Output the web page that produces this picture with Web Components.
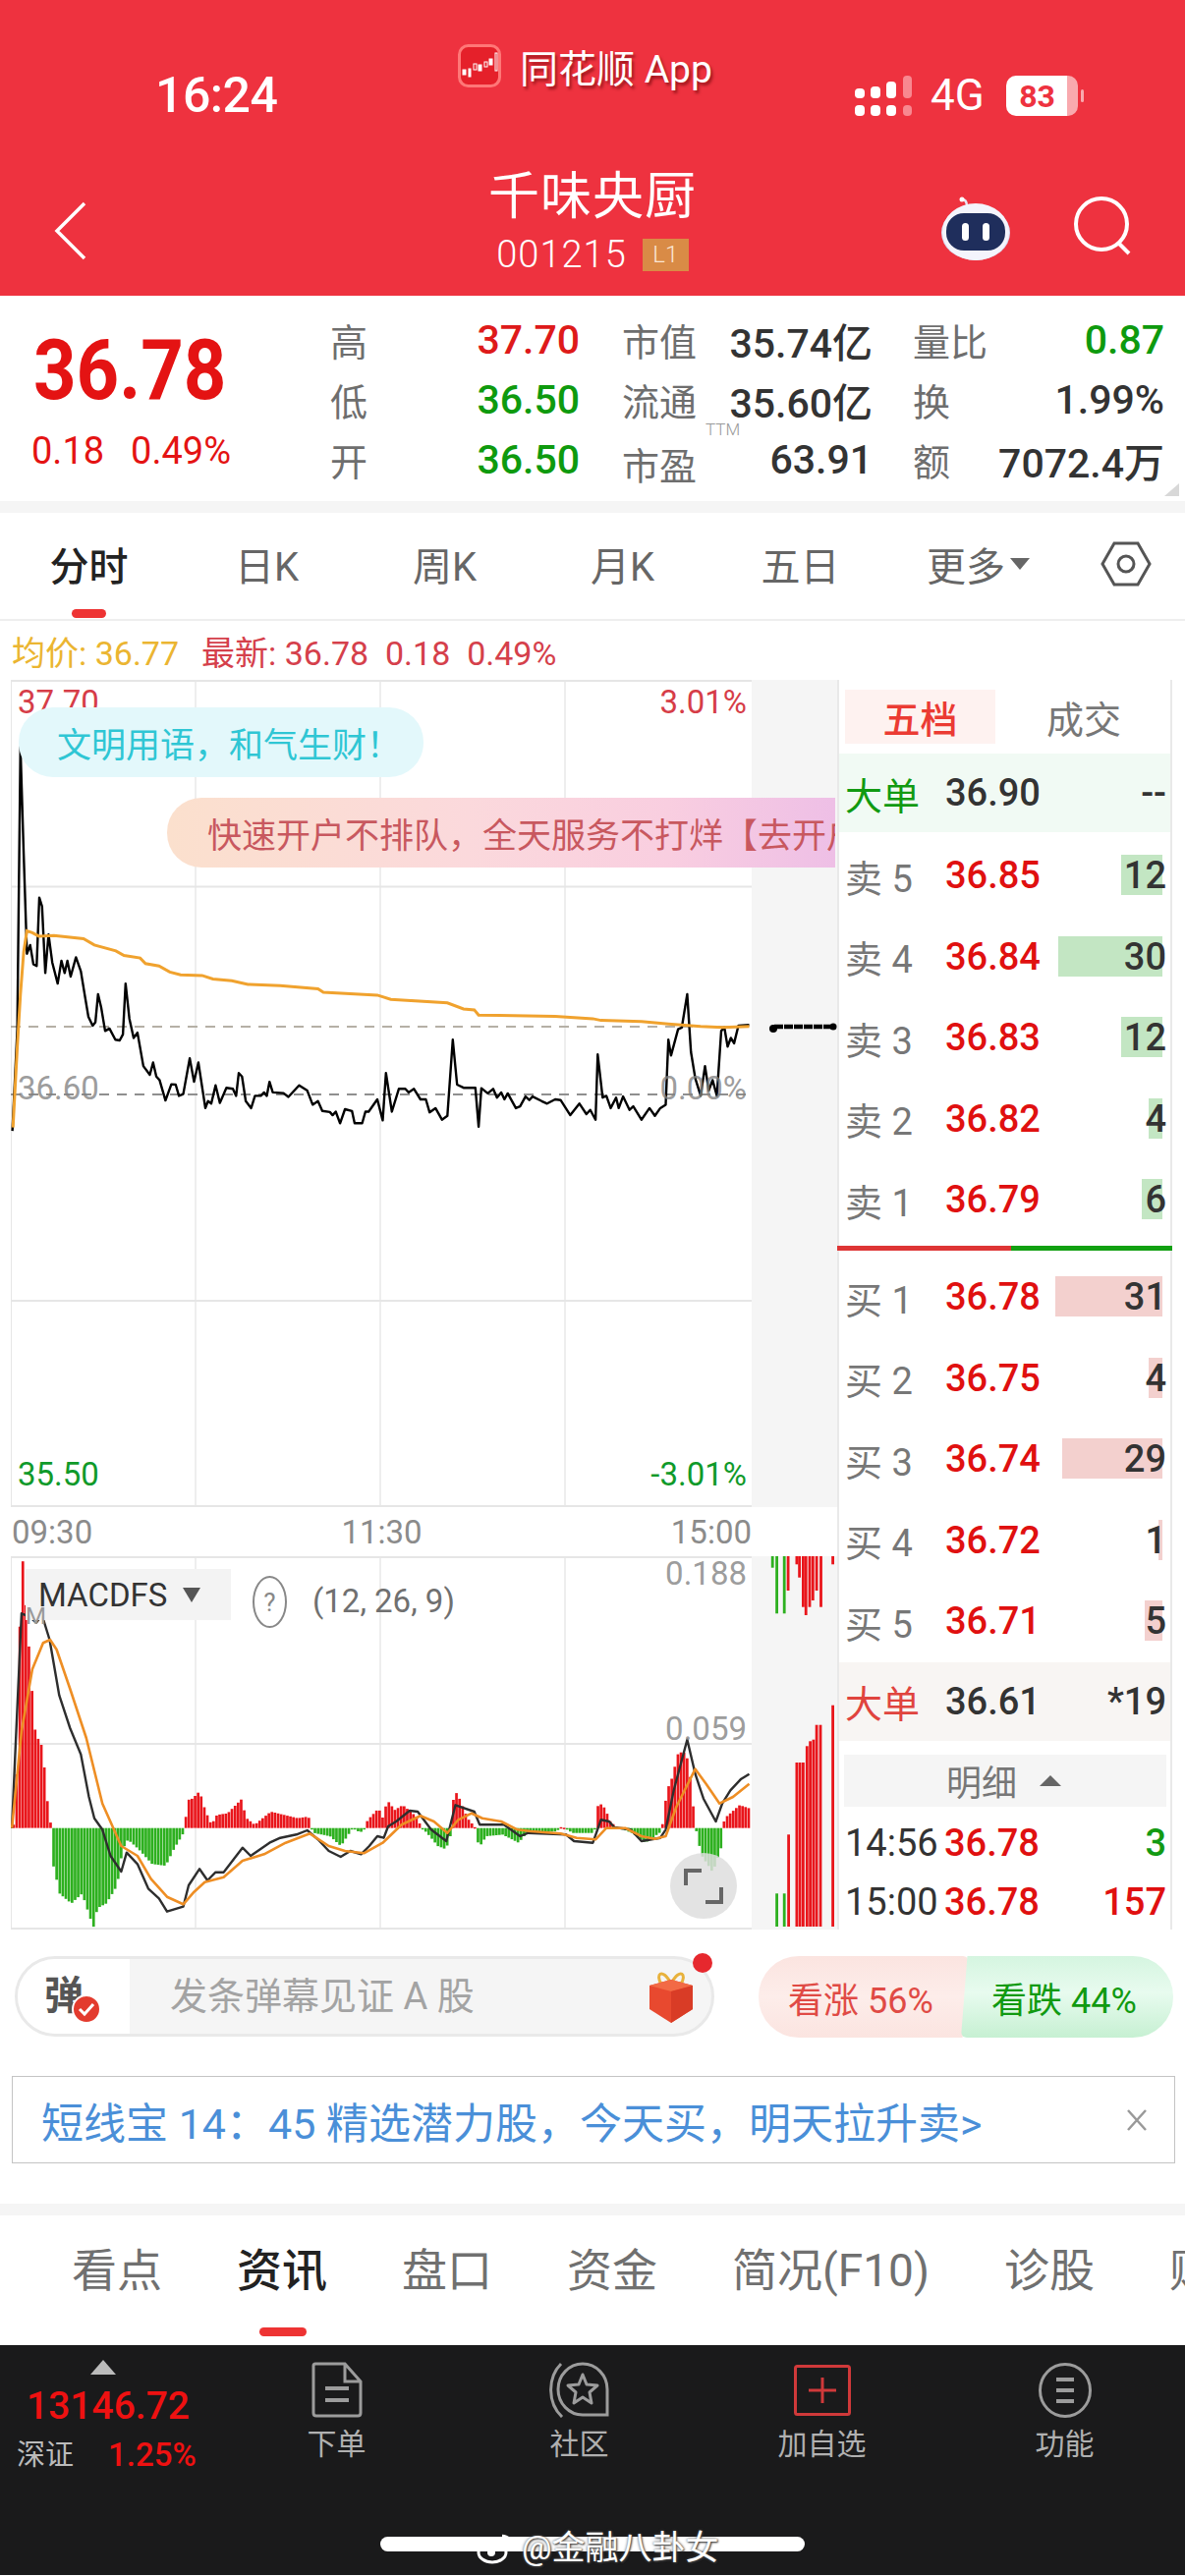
<!DOCTYPE html>
<html lang="zh">
<head>
<meta charset="utf-8">
<title>千味央厨</title>
<style>
  html, body { margin: 0; background: #fff; }
  body { width: 1206px; height: 2622px; overflow: hidden; display: flex; flex-direction: column;
    font-family: Roboto, "Noto Sans CJK SC", sans-serif; color: #333; }
</style>
</head>
<body>
<app-header></app-header>
<quote-panel></quote-panel>
<period-tabs></period-tabs>
<price-legend></price-legend>
<chart-area>
  <intraday-chart></intraday-chart>
  <order-book>
    <book-row kind="big-sell" label="大单" price="36.90" qty="--"></book-row>
    <book-row kind="sell" label="卖 5" price="36.85" qty="12" bar="42"></book-row>
    <book-row kind="sell" label="卖 4" price="36.84" qty="30" bar="106"></book-row>
    <book-row kind="sell" label="卖 3" price="36.83" qty="12" bar="42"></book-row>
    <book-row kind="sell" label="卖 2" price="36.82" qty="4" bar="14"></book-row>
    <book-row kind="sell" label="卖 1" price="36.79" qty="6" bar="21"></book-row>
    <div class="split" slot="split"></div>
    <book-row slot="buy" kind="buy" label="买 1" price="36.78" qty="31" bar="109"></book-row>
    <book-row slot="buy" kind="buy" label="买 2" price="36.75" qty="4" bar="14"></book-row>
    <book-row slot="buy" kind="buy" label="买 3" price="36.74" qty="29" bar="102"></book-row>
    <book-row slot="buy" kind="buy" label="买 4" price="36.72" qty="1" bar="4"></book-row>
    <book-row slot="buy" kind="buy" label="买 5" price="36.71" qty="5" bar="18"></book-row>
    <book-row slot="buy" kind="big-buy" label="大单" price="36.61" qty="*19"></book-row>
  </order-book>
</chart-area>
<danmu-bar></danmu-bar>
<ad-banner></ad-banner>
<news-tabs></news-tabs>
<bottom-bar></bottom-bar>

<script>
// every static block is just a template cloned into an open shadow root
function component(name, html) {
  const template = document.createElement('template');
  template.innerHTML = html;
  customElements.define(name, class extends HTMLElement {
    constructor() {
      super();
      this.attachShadow({mode: 'open'}).appendChild(template.content.cloneNode(true));
    }
  });
}

component('app-header', `
  <style>
    :host { display: block; height: 301px; background: #EE323F; color: #fff; flex: none; }
    .status { height: 150px; display: flex; box-sizing: border-box; padding-left: 158px; }
    .time { width: 308px; padding-top: 68px; font-size: 50px; font-weight: 500; line-height: 58px; letter-spacing: -.5px; }
    .app { display: flex; align-items: center; gap: 19px; height: 44px; margin-top: 45px; font-size: 39px;
      text-shadow: 2px 3px 3px rgba(90,0,0,.55); }
    .right { margin-left: auto; padding: 77px 109px 0 0; display: flex; gap: 19px; height: 41px; }
    .net { font-size: 44px; line-height: 41px; font-weight: 400; width: 58px; }
    .batt { width: 73px; height: 41px; border-radius: 10px; color: #EE323F; font-size: 32px; font-weight: 700;
      display: flex; align-items: center; justify-content: center; padding-right: 10px; box-sizing: border-box;
      background: linear-gradient(90deg, #fff 85%, #f9a9ae 85%); position: relative; }
    .batt::after { content: ""; position: absolute; right: -6px; top: 14px; width: 3px; height: 13px; background: #f9a9ae; border-radius: 2px; }
    .nav { height: 151px; display: grid; grid-template-columns: 1fr auto 1fr; }
    .back { padding: 55px 0 0 55px; }
    .mid { display: flex; flex-direction: column; align-items: center; padding-top: 20px; }
    .name { font-size: 52px; line-height: 62px; letter-spacing: 1px; }
    .code { display: flex; align-items: center; gap: 16px; margin-top: 10px; font-size: 38px; font-weight: 300; line-height: 34px; letter-spacing: 1px; }
    .lv { width: 47px; height: 33px; background: #D98B46; font-size: 24px; color: #fbe6d3; text-align: center; line-height: 33px; letter-spacing: 0; }
    .tools { display: flex; justify-content: flex-end; gap: 63px; padding: 50px 54px 0 0; align-items: flex-start; }
  </style>
  <div class="status">
    <div class="time">16:24</div>
    <div class="app">
      <svg width="44" height="44" viewBox="0 0 44 44">
        <rect x="1.5" y="1.5" width="41" height="41" rx="9" fill="#E5202A" stroke="#F77" stroke-width="3"/>
        <g fill="#fff" stroke="#fff"><rect x="5" y="26" width="3" height="5"/><rect x="11" y="25" width="2" height="8"/><rect x="16" y="20" width="3" height="6" fill="none"/><rect x="21" y="21" width="3" height="6"/><rect x="27" y="18" width="3" height="5" fill="none"/><rect x="32" y="15" width="3" height="6"/><rect x="38" y="9" width="2" height="18" fill="none"/></g>
      </svg>
      <span>同花顺 App</span>
    </div>
    <div class="right">
      <svg width="58" height="41" viewBox="0 0 58 41">
        <g fill="#fff"><rect x="0" y="13" width="10" height="10" rx="4"/><rect x="0" y="30" width="10" height="11" rx="4"/><rect x="16" y="11" width="10" height="12" rx="4"/><rect x="16" y="30" width="10" height="11" rx="4"/><rect x="32" y="6" width="10" height="17" rx="4"/><rect x="32" y="30" width="10" height="11" rx="4"/></g>
        <g fill="#F88890"><rect x="49" y="0" width="9" height="23" rx="4"/><rect x="49" y="30" width="9" height="11" rx="4"/></g>
      </svg>
      <div class="net">4G</div>
      <div class="batt">83</div>
    </div>
  </div>
  <div class="nav">
    <div class="back">
      <svg width="34" height="60" viewBox="0 0 34 60"><path d="M31 2 L3 30 L31 58" fill="none" stroke="#fff" stroke-width="3.5"/></svg>
    </div>
    <div class="mid">
      <div class="name">千味央厨</div>
      <div class="code">001215<span class="lv">L1</span></div>
    </div>
    <div class="tools">
      <svg width="72" height="66" viewBox="0 0 72 66">
        <path d="M27 10 q0 -7 -5 -7" fill="none" stroke="#e9e6f5" stroke-width="2.5"/><circle cx="22" cy="3" r="2.5" fill="#fff"/>
        <ellipse cx="36" cy="37" rx="35" ry="28" fill="#DADCF2"/>
        <ellipse cx="36" cy="36" rx="34" ry="29" fill="#F4F4FC"/>
        <rect x="6" y="17" width="60" height="38" rx="18" fill="#1F2E5C"/>
        <rect x="22" y="27" width="7" height="18" rx="3.5" fill="#fff"/><rect x="43" y="27" width="7" height="18" rx="3.5" fill="#fff"/>
      </svg>
      <svg width="60" height="60" viewBox="0 0 60 60">
        <circle cx="29" cy="28" r="26" fill="none" stroke="#fff" stroke-width="4"/><path d="M46 47 L57 58" stroke="#fff" stroke-width="4"/>
      </svg>
    </div>
  </div>
`);

component('quote-panel', `
  <style>
    :host { display: flex; height: 209px; background: #fff; flex: none; position: relative; border-bottom: 12px solid #F5F5F5; }
    .now { width: 336px; box-sizing: border-box; padding: 33px 0 0 32px; color: #E41313; }
    .big { font-size: 76px; font-weight: 700; line-height: 76px; transform: scaleY(1.12); transform-origin: top left; letter-spacing: 0; padding-left: 2px; }
    .chg { display: flex; gap: 27px; margin-top: 27px; font-size: 38px; line-height: 44px; }
    .grid { display: grid; grid-template-columns: 149px 105px 43px 78px 177px 41px 79px 177px; grid-auto-rows: 61px; padding-top: 14px; align-items: center; }
    .l { font-size: 38px; color: #6e6e6e; white-space: nowrap; }
    .v { font-size: 41px; font-weight: 500; text-align: right; white-space: nowrap; color: #333; }
    .up { color: #DE1A1A; } .dn { color: #0E9A0E; }
    .sp { grid-column: auto; }
    .ttm { position: relative; top: 4px; }
    .ttm sup { position: absolute; left: 85px; top: -17px; font-size: 17px; color: #999; line-height: 20px; font-weight: 300; }
    .corner { position: absolute; right: 6px; bottom: 5px; border-left: 15px solid transparent; border-bottom: 13px solid #d8d8d8; }
  </style>
  <div class="now">
    <div class="big">36.78</div>
    <div class="chg"><span>0.18</span><span>0.49%</span></div>
  </div>
  <div class="grid">
    <div class="l">高</div><div class="v up">37.70</div><div class="sp"></div><div class="l">市值</div><div class="v">35.74亿</div><div class="sp"></div><div class="l">量比</div><div class="v dn">0.87</div>
    <div class="l">低</div><div class="v dn">36.50</div><div class="sp"></div><div class="l">流通</div><div class="v">35.60亿</div><div class="sp"></div><div class="l">换</div><div class="v">1.99%</div>
    <div class="l">开</div><div class="v dn">36.50</div><div class="sp"></div><div class="l ttm">市盈<sup>TTM</sup></div><div class="v">63.91</div><div class="sp"></div><div class="l">额</div><div class="v">7072.4万</div>
  </div>
  <div class="corner"></div>
`);

component('period-tabs', `
  <style>
    :host { display: grid; grid-template-columns: repeat(6, 181px) 120px; height: 110px; box-sizing: border-box; border-bottom: 2px solid #EEE; position: relative; flex: none;
      font-size: 40px; color: #666; align-items: center; justify-items: center; padding-bottom: 4px; }
    .on { color: #222; font-weight: 500; }
    .on::after { content: ""; position: absolute; left: 73px; bottom: 1px; width: 35px; height: 9px; border-radius: 5px; background: #EE3333; }
    .more { display: flex; align-items: center; gap: 5px; }
    .more i { border: 10px solid transparent; border-top: 12px solid #666; border-bottom: 0; }
  </style>
  <div class="on">分时</div><div>日K</div><div>周K</div><div>月K</div><div>五日</div>
  <div class="more">更多<i></i></div>
  <svg width="52" height="46" viewBox="0 0 52 46"><path d="M14 2 H38 L50 23 L38 44 H14 L2 23 Z" fill="none" stroke="#555" stroke-width="3"/><circle cx="26" cy="23" r="8" fill="none" stroke="#555" stroke-width="3"/></svg>
`);

component('price-legend', `
  <style>
    :host { display: flex; height: 60px; align-items: center; padding-left: 12px; font-size: 34px; color: #D5404B; flex: none; white-space: pre; }
    .avg { color: #EBB531; margin-right: 23px; }
  </style>
  <span class="avg">均价: 36.77</span><span>最新: 36.78  0.18  0.49%</span>
`);

component('chart-area', `
  <style>
    :host { display: flex; height: 1272px; padding-left: 11px; flex: none; }
  </style>
  <slot></slot>
`);

// points below were read off the reference crops, so they get mapped to page px here
const mainLine = [23,1490,32,1200,38,395,44,700,50,985,56,960,62,1015,68,1020,73,825,78,850,84,1040,90,930,97,1010,107,1070,114,1005,120,1040,125,1005,131,1050,141,995,150,1035,157,1100,164,1165,172,1190,177,1180,182,1100,188,1140,195,1205,203,1198,214,1230,222,1232,228,1215,233,1070,240,1170,248,1225,255,1210,266,1305,278,1330,284,1295,290,1335,296,1345,307,1403,318,1357,326,1358,332,1390,340,1385,352,1283,360,1350,368,1295,381,1425,386,1405,392,1412,400,1360,408,1410,420,1367,432,1370,438,1390,443,1325,449,1335,456,1405,466,1425,473,1390,484,1390,490,1380,495,1390,500,1350,506,1380,526,1382,535,1393,555,1360,570,1375,580,1415,590,1405,598,1433,612,1436,617,1445,623,1435,631,1468,640,1428,653,1433,658,1468,672,1468,678,1435,684,1435,700,1400,710,1460,716,1325,727,1435,740,1370,752,1370,758,1380,768,1370,780,1400,790,1400,797,1437,808,1425,820,1458,830,1447,840,1230,848,1358,860,1367,882,1367,888,1478,893,1368,905,1383,915,1370,922,1395,930,1380,936,1400,942,1383,957,1425,965,1420,975,1392,982,1402,988,1392,1005,1405,1015,1412,1030,1400,1040,1402,1058,1445,1075,1412,1088,1442,1095,1430,1105,1458,1109,1272,1118,1395,1125,1390,1133,1425,1143,1395,1148,1425,1156,1392,1168,1430,1175,1420,1190,1458,1205,1425,1215,1447,1225,1425,1235,1415,1240,1230,1245,1275,1258,1200,1265,1195,1275,1100,1282,1265,1290,1340,1300,1390,1308,1305,1315,1375,1322,1345,1330,1390,1338,1205,1344,1195,1350,1250,1356,1225,1362,1240,1370,1190,1390,1188];
const mainAvg = [24,1480,32,1250,38,1100,44,980,50,920,60,925,72,935,100,933,155,942,175,960,215,977,230,990,260,997,270,1013,295,1020,315,1037,335,1045,375,1047,395,1057,430,1062,460,1072,520,1076,590,1085,600,1095,700,1103,725,1115,830,1125,860,1142,880,1145,888,1160,1030,1163,1100,1170,1115,1175,1190,1178,1240,1185,1300,1192,1340,1195,1390,1192];
const macdHist = [22,995,27,930,32,600,36,200,42,170,46,330,52,455,58,600,64,720,72,725,78,770,84,900,90,950,92,995,93,1115,100,1110,105,1190,115,1205,130,1225,150,1195,165,1270,172,1300,178,1240,195,1225,215,1170,225,1060,235,1030,255,1060,280,1105,305,1110,320,1060,340,1005,345,910,355,905,368,882,378,940,390,985,400,955,420,950,445,908,455,965,470,985,500,945,550,965,570,960,575,995,580,1010,610,1020,630,1050,650,1000,653,990,665,1010,672,1000,680,970,700,935,708,965,716,910,730,940,745,925,770,960,780,995,790,1010,810,1050,825,1060,835,1010,840,875,850,905,865,965,880,995,886,1055,900,1020,930,1015,960,1040,975,1010,1030,1005,1040,990,1060,1010,1100,1010,1108,915,1120,935,1130,975,1140,990,1170,1010,1195,1040,1225,1005,1235,880,1245,840,1255,770,1265,760,1275,790,1288,995,1292,1020,1298,1075,1320,1130,1335,1060,1338,1000,1342,965,1370,925,1388,935];
const macdDif = [22,995,30,700,40,340,55,350,67,368,78,345,92,420,110,590,130,690,150,770,165,900,175,965,190,1000,205,1080,225,1128,235,1070,255,1105,275,1180,295,1210,310,1250,340,1235,350,1170,370,1120,385,1155,400,1130,415,1130,450,1055,465,1080,500,1040,520,1025,550,1015,570,1002,590,1030,610,1065,632,1083,650,1065,670,1075,685,1050,700,1020,712,1025,720,990,735,975,760,942,775,945,800,1000,828,1035,845,925,880,945,890,985,935,985,965,1020,980,1010,1050,1015,1065,1035,1100,1040,1115,970,1130,975,1140,993,1170,1000,1190,1035,1225,1025,1235,1000,1250,880,1275,725,1290,830,1305,905,1328,975,1340,920,1355,880,1375,845,1390,830];
const macdDea = [22,995,40,700,60,510,80,430,93,420,105,450,130,570,160,720,190,920,225,1050,255,1080,280,1150,310,1205,340,1228,360,1190,380,1160,415,1145,450,1095,490,1075,530,1040,575,1012,610,1050,640,1065,675,1072,710,1040,745,985,780,958,805,975,830,1010,850,970,875,950,895,965,930,975,960,1000,985,1005,1040,1012,1070,1025,1105,1030,1125,995,1160,995,1190,1020,1215,1028,1235,1020,1255,930,1290,815,1310,860,1335,920,1360,900,1390,860];
const lateTop = [[1433,200,'g'],[1441,340,'g'],[1455,340,'g'],[1462,270,'r'],[1478,190,'r'],[1483,230,'r'],[1490,320,'r'],[1495,345,'r'],[1502,320,'r'],[1508,300,'r'],[1515,270,'r'],[1523,320,'r'],[1545,190,'r']];
const lateBottom = [[1441,1195,'g'],[1455,1195,'g'],[1463,1015,'r'],[1478,795,'r'],[1484,795,'r'],[1490,795,'r'],[1497,745,'r'],[1503,730,'r'],[1509,725,'r'],[1515,680,'r'],[1522,680,'r'],[1545,620,'r']];

const mx = u => (u / 1.823).toFixed(1);
const my = v => (620 + v / 2.8).toFixed(1);
const dy = v => (1530 + v / 3).toFixed(1);
const poly = (pts, fy) => {
  let out = [];
  for (let i = 0; i < pts.length; i += 2) out.push(mx(pts[i]) + ',' + fy(pts[i + 1]));
  return out.join(' ');
};
const RED = '#E9151B', GREEN = '#2DB01F';

function macdBars() {
  const zero = 1530 + 995 / 3;
  let s = '';
  let j = 0;
  for (let x = 12.5; x < 762; x += 3.13) {
    const u = x * 1.823;
    while (j < macdHist.length - 4 && macdHist[j + 2] < u) j += 2;
    const t = Math.min(1, Math.max(0, (u - macdHist[j]) / (macdHist[j + 2] - macdHist[j])));
    const y = (1530 + (macdHist[j + 1] + (macdHist[j + 3] - macdHist[j + 1]) * t) / 3);
    const top = Math.min(y, zero), h = Math.abs(y - zero);
    s += `<rect x="${x.toFixed(1)}" y="${top.toFixed(1)}" width="2.7" height="${Math.max(h, 1.5).toFixed(1)}" fill="${y < zero ? RED : GREEN}"/>`;
  }
  return s;
}
function lateBars() {
  let s = '';
  for (const [u, v, c] of lateTop) s += `<rect x="${mx(u) - 1.3}" y="1585" width="2.8" height="${(dy(v) - 1585).toFixed(1)}" fill="${c == 'r' ? RED : GREEN}"/>`;
  for (const [u, v, c] of lateBottom) s += `<rect x="${mx(u) - 1.3}" y="${dy(v)}" width="2.8" height="${(1962 - dy(v)).toFixed(1)}" fill="${c == 'r' ? RED : GREEN}"/>`;
  return s;
}
const vGrid = (y1, y2) => [199, 387, 575].map(x => `<line x1="${x}" x2="${x}" y1="${y1}" y2="${y2}" stroke="#E8E8E8" stroke-width="1.5"/>`).join('');

component('intraday-chart', `
  <style>
    :host { display: flex; flex-direction: column; width: 841px; flex: none; font-size: 33px; }
    .plot { position: relative; overflow: hidden; }
    .main { height: 842px; }
    .macd { height: 380px; }
    svg { display: block; position: absolute; left: 0; top: 0; }
    .tag { position: absolute; line-height: 36px; white-space: nowrap; }
    .red { color: #D63D48; } .gray { color: rgba(130,130,130,.8); } .green { color: #109A2A; }
    .lft { left: 7px; } .rgt { right: 92px; }
    .times { height: 50px; width: 754px; display: flex; justify-content: space-between; align-items: center; color: #8B8B8B; font-size: 33px; padding: 0 0 0 1px; box-sizing: border-box; }
    .bubble { position: absolute; display: flex; align-items: center; height: 71px; font-size: 35px; white-space: nowrap; overflow: hidden; box-sizing: border-box; }
    .civil { left: 8px; top: 28px; width: 412px; padding-left: 39px; border-radius: 35px; background: #E3F8FB; color: #2FC6D4; }
    .open { left: 159px; top: 120px; width: 680px; padding-left: 41px; border-radius: 35px 0 0 35px; color: #C8585F;
      background: linear-gradient(90deg, #FBE0CD, #FBD9DC 45%, #F9CEE0 75%, #EEBFE6); }
    .chip { position: absolute; left: 15px; top: 13px; width: 209px; height: 52px; background: #F3F3F3; display: flex; align-items: center; padding-left: 13px; box-sizing: border-box; color: #333; gap: 16px; }
    .chip i { border: 9px solid transparent; border-top: 15px solid #555; border-bottom: 0; }
    .help { position: absolute; left: 246px; top: 20px; width: 35px; height: 53px; box-sizing: border-box; border: 2px solid #888; border-radius: 50%; color: #888; font-size: 26px; display: flex; align-items: center; justify-content: center; }
    .params { position: absolute; left: 307px; top: 21px; color: #707070; line-height: 50px; }
    .m { position: absolute; left: 15px; top: 46px; color: #999; font-size: 24px; line-height: 30px; }
    .expand { position: absolute; left: 671px; top: 302px; width: 68px; height: 67px; border-radius: 50%; background: rgba(222,222,222,.85); }
    .expand svg { left: 14px; top: 15px; }
  </style>
  <div class="plot main">
    <svg width="841" height="842" viewBox="11 693 841 842">
      <rect x="765" y="693" width="87" height="842" fill="#F5F5F5"/>
      ${vGrid(693, 1535)}
      <path d="M11 694 H765 M11 1534 H765 M11 903.5 H765 M11 1325 H765 M11 693 V1535" stroke="#E6E6E6" stroke-width="2" fill="none"/>
      <line x1="11" x2="765" y1="1046" y2="1046" stroke="#B5B0A6" stroke-width="2" stroke-dasharray="10 8"/>
      <line x1="11" x2="765" y1="1115" y2="1115" stroke="#8f8f8f" stroke-width="2" stroke-dasharray="10 8"/>
      <polyline points="${poly(mainLine, my)}" fill="none" stroke="#000" stroke-width="2.4" stroke-linejoin="round"/>
      <polyline points="${poly(mainAvg, my)}" fill="none" stroke="#F0A22E" stroke-width="3"/>
      <line x1="788" x2="848" y1="1046" y2="1046" stroke="#000" stroke-width="4.5" stroke-dasharray="9 1"/>
      <circle cx="787" cy="1048" r="4" fill="#000"/><circle cx="848" cy="1046" r="3.5" fill="#000"/>
    </svg>
    <span class="tag red lft" style="top:5px">37.70</span>
    <span class="tag red rgt" style="top:5px">3.01%</span>
    <span class="tag gray lft" style="top:398px">36.60</span>
    <span class="tag gray rgt" style="top:398px">0.00%</span>
    <span class="tag green lft" style="top:791px">35.50</span>
    <span class="tag green rgt" style="top:791px">-3.01%</span>
    <div class="bubble civil">文明用语，和气生财！</div>
    <div class="bubble open">快速开户不排队，全天服务不打烊【去开户】</div>
  </div>
  <div class="times"><span>09:30</span><span>11:30</span><span>15:00</span></div>
  <div class="plot macd">
    <svg width="841" height="380" viewBox="11 1585 841 380">
      <rect x="765" y="1585" width="87" height="380" fill="#F5F5F5"/>
      ${vGrid(1585, 1965)}
      <path d="M11 1586 H765 M11 1964 H765 M11 1776 H765 M11 1585 V1965" stroke="#E6E6E6" stroke-width="2" fill="none"/>
      ${macdBars()}
      ${lateBars()}
      <polyline points="${poly(macdDif, dy)}" fill="none" stroke="#2E2E2E" stroke-width="2.4" stroke-linejoin="round"/>
      <polyline points="${poly(macdDea, dy)}" fill="none" stroke="#EE8E24" stroke-width="2.6" stroke-linejoin="round"/>
    </svg>
    <div class="chip"><span>MACDFS</span><i></i></div>
    <span class="m">M</span>
    <div class="help">?</div>
    <span class="params">(12, 26, 9)</span>
    <span class="tag gray rgt" style="top:0">0.188</span>
    <span class="tag gray rgt" style="top:158px">0.059</span>
    <div class="expand">
      <svg width="40" height="38" viewBox="0 0 40 38"><path d="M2 18 V3 H18 M38 20 V35 H22" fill="none" stroke="#666" stroke-width="4"/></svg>
    </div>
  </div>
`);

component('order-book', `
  <style>
    :host { display: block; width: 341px; box-sizing: border-box; flex: none; padding-top: 10px; border: solid #E9E9E9; border-width: 0 2px; height: 1272px; }
    .head { display: flex; height: 55px; font-size: 38px; margin: 0 0 10px 6px; color: #777; }
    .head div { width: 153px; display: flex; align-items: center; justify-content: center; }
    .head .on { background: #FEF2F0; color: #EB3B33; font-weight: 500; }
    .head .off { width: 170px; padding-left: 10px; box-sizing: border-box; }
    ::slotted(.split) { height: 5px; margin: 5.5px -2px 6px; background: linear-gradient(90deg, #DE3535 52%, #12A012 52%); }
    .more { height: 53px; margin: 14px 4px 7px 5px; background: #F5F5F5; color: #777; font-size: 36px; display: flex; align-items: center; padding-left: 104px; gap: 23px; }
    .more i { border: 11px solid transparent; border-bottom: 11px solid #666; border-top: 0; }
    .trade { display: grid; grid-template-columns: 101px 1fr auto; height: 60px; align-items: center; font-size: 38px; font-weight: 500; padding: 0 4px 0 6px; }
    .t { color: #333; font-weight: 400; white-space: nowrap; } .up { color: #E01010; } .dn { color: #139A13; }
  </style>
  <div class="head"><div class="on">五档</div><div class="off">成交</div></div>
  <slot></slot>
  <slot name="split"></slot>
  <slot name="buy"></slot>
  <div class="more"><span>明细</span><i></i></div>
  <div class="trade"><span class="t">14:56</span><span class="up">36.78</span><span class="dn">3</span></div>
  <div class="trade"><span class="t">15:00</span><span class="up">36.78</span><span class="up">157</span></div>
`);

const bookTemplate = document.createElement('template');
bookTemplate.innerHTML = `
  <style>
    :host { display: grid; grid-template-columns: 102px 1fr auto; align-items: center; height: 82.5px; padding: 0 4px 0 6px; font-size: 38px; box-sizing: border-box; }
    :host([kind^="big"]) { height: 80px; margin-bottom: 2.5px; }
    :host([kind="big-sell"]) { background: #F1FAF4; margin-bottom: 3px; }
    :host([kind="big-buy"]) { background: #F8F5F3; }
    .label { color: #777; white-space: nowrap; }
    .price { color: #E01010; font-weight: 500; }
    :host([kind^="big"]) .price { color: #333; }
    :host([kind="big-sell"]) .label { color: #129A12; }
    :host([kind="big-buy"]) .label { color: #E0443E; }
    .qty { position: relative; color: #333; font-weight: 500; z-index: 0; }
    .bar { position: absolute; right: 4px; top: 1px; height: 41px; background: #C3E6C3; z-index: -1; }
    :host([kind="buy"]) .bar { background: #F3D0CE; }
  </style>
  <span class="label"></span><span class="price"></span><span class="qty"><span class="bar"></span><span class="n"></span></span>
`;
class BookRow extends HTMLElement {
  constructor() {
    super();
    this.attachShadow({mode: 'open'}).appendChild(bookTemplate.content.cloneNode(true));
  }
  connectedCallback() {
    const root = this.shadowRoot;
    root.querySelector('.label').textContent = this.getAttribute('label');
    root.querySelector('.price').textContent = this.getAttribute('price');
    root.querySelector('.n').textContent = this.getAttribute('qty');
    const bar = root.querySelector('.bar');
    if (this.hasAttribute('bar')) bar.style.width = this.getAttribute('bar') + 'px';
    else bar.remove();
  }
}
customElements.define('book-row', BookRow);

component('danmu-bar', `
  <style>
    :host { display: flex; height: 82px; margin-top: 27px; padding-left: 15px; flex: none; position: relative; }
    .pill { width: 712px; box-sizing: border-box; border: 3px solid #E9E9E9; border-radius: 41px; display: flex; overflow: hidden; background: #F5F5F5; }
    .tan { width: 114px; background: #fff; display: flex; padding: 13px 0 0 27px; box-sizing: border-box; font-size: 40px; font-weight: 700; color: #555; position: relative; line-height: 50px; }
    .tan svg { position: absolute; left: 55px; top: 36px; }
    .ph { font-size: 38px; color: #A3A3A3; flex: 1; padding-left: 41px; line-height: 76px; white-space: nowrap; }
    .gift { margin: 13px 17px 0 0; }
    .dot { position: absolute; left: 705px; top: -3px; width: 20px; height: 20px; background: #E6282E; border-radius: 50%; }
    .vote { position: absolute; top: 0; height: 83px; display: flex; align-items: center; font-size: 36px; white-space: nowrap; box-sizing: border-box; }
    .bull { left: 772px; width: 214px; padding-left: 30px; color: #E04A45; border-radius: 41px 6px 6px 41px; background: linear-gradient(180deg, #FBE4E0, #FDEDEA 50%, #FBE4E0); clip-path: polygon(0 0, 100% 0, 97% 100%, 0 100%); }
    .bear { left: 978px; width: 216px; padding-left: 31px; color: #119A11; border-radius: 6px 41px 41px 6px; background: linear-gradient(180deg, #D5F5E0, #E8FBEF 45%, #C6F0D2); clip-path: polygon(3% 0, 100% 0, 100% 100%, 0 100%); }
  </style>
  <div class="pill">
    <div class="tan">弹
      <svg width="30" height="30" viewBox="0 0 30 30"><circle cx="15" cy="15" r="14" fill="#E33B2E" stroke="#fff" stroke-width="2"/><path d="M8 15 L13 20 L22 10" fill="none" stroke="#fff" stroke-width="3"/></svg>
    </div>
    <div class="ph">发条弹幕见证 A 股</div>
    <svg class="gift" width="48" height="52" viewBox="0 0 48 52">
      <path d="M24 12 C14 -6 8 4 14 12 Z M24 12 C34 -6 40 4 34 12 Z" fill="none" stroke="#E8B23C" stroke-width="3"/>
      <path d="M2 14 L24 8 L46 14 L46 38 L24 52 L2 38 Z" fill="#E8492F"/>
      <path d="M24 20 L2 14 L24 8 L46 14 Z" fill="#F26A45"/><path d="M24 20 V52 L46 38 V14 Z" fill="#D93C26"/>
    </svg>
  </div>
  <div class="dot"></div>
  <div class="vote bull">看涨 56%</div>
  <div class="vote bear">看跌 44%</div>
`);

component('ad-banner', `
  <style>
    :host { display: flex; align-items: center; height: 89px; box-sizing: border-box; margin: 40px 10px 0 12px; border: 2px solid #C4C4C4; border-width: 1.5px; padding: 0 26px 0 29px; font-size: 43px; color: #4A8FD8; flex: none; white-space: nowrap; }
    span { flex: 1; }
  </style>
  <span>短线宝 14：45 精选潜力股，今天买，明天拉升卖&gt;</span>
  <svg width="24" height="24" viewBox="0 0 24 24"><path d="M3 2 L21 22 M21 2 L3 22" stroke="#999" stroke-width="2.5"/></svg>
`);

component('news-tabs', `
  <style>
    :host { display: flex; height: 132px; gap: 76px; padding: 25px 0 0 73px; box-sizing: border-box; margin-top: 41px; border-top: 12px solid #F5F5F5; flex: none; height: 144px;
      font-size: 46px; color: #707070; white-space: nowrap; overflow: hidden; position: relative; line-height: 62px; }
    :host > * { flex: none; }
    .on { color: #222; font-weight: 500; }
    .bar { position: absolute; left: 264px; top: 114px; width: 48px; height: 9px; border-radius: 5px; background: #EE3333; }
  </style>
  <span>看点</span><span class="on">资讯</span><span>盘口</span><span>资金</span><span>简况(F10)</span><span>诊股</span><span>财务</span>
  <div class="bar"></div>
`);

component('nav-item', `
  <style>
    :host { display: flex; flex-direction: column; align-items: center; padding-top: 17px; }
    .icon { height: 57px; display: flex; align-items: center; }
    .label { margin-top: 10px; font-size: 30px; line-height: 34px; color: #B0B0B0; }
  </style>
  <div class="icon"><slot name="icon"></slot></div>
  <div class="label"><slot></slot></div>
`);

component('bottom-bar', `
  <style>
    :host { display: grid; grid-template-columns: 219px repeat(4, 247px); height: 234px; background: #1A1A1B; flex: none; position: relative; overflow: hidden; }
    .idx { display: flex; flex-direction: column; padding-top: 15px; }
    .tri { width: 0; margin-left: 92px; border: 13px solid transparent; border-bottom: 15px solid #BBB; border-top: 0; }
    .val { margin: 10px 0 0 27px; font-size: 39px; font-weight: 500; line-height: 44px; color: #EE1111; }
    .row { display: flex; align-items: center; gap: 35px; padding-left: 17px; margin-top: 8px; line-height: 40px; font-size: 29px; color: #BBB; }
    .row b { font-weight: 500; font-size: 33px; color: #EE1111; }
    .home { position: absolute; left: 387px; top: 195px; width: 432px; height: 15px; background: #fff; border-radius: 8px; }
    .mark { position: absolute; left: 485px; top: 182px; display: flex; align-items: center; gap: 6px; font-size: 34px; line-height: 48px; color: #fff; text-shadow: 0 0 3px #555, 1px 1px 2px #333; white-space: nowrap; }
  </style>
  <div class="idx">
    <div class="tri"></div>
    <div class="val">13146.72</div>
    <div class="row"><span>深证</span><b>1.25%</b></div>
  </div>
  <nav-item>
    <svg slot="icon" width="52" height="57" viewBox="0 0 52 57"><path d="M4 2 H34 L50 20 V52 Q50 55 47 55 H5 Q2 55 2 52 V4 Q2 2 4 2 Z M34 2 V20 H50" fill="none" stroke="#9C9C9C" stroke-width="3"/><path d="M14 27 H38 M14 39 H38" stroke="#9C9C9C" stroke-width="4"/></svg>
    下单
  </nav-item>
  <nav-item>
    <svg slot="icon" width="62" height="57" viewBox="0 0 62 57"><path d="M12 2 C-2 16 -2 42 13 56" fill="none" stroke="#9C9C9C" stroke-width="3"/><path d="M59 54 H34 A25 26 0 1 1 59 28 Z" fill="none" stroke="#9C9C9C" stroke-width="3"/><path d="M34 13 L38 23 L49 24 L41 31 L43 42 L34 36 L25 42 L27 31 L19 24 L30 23 Z" fill="none" stroke="#9C9C9C" stroke-width="3" stroke-linejoin="round"/></svg>
    社区
  </nav-item>
  <nav-item>
    <svg slot="icon" width="58" height="52" viewBox="0 0 58 52"><rect x="1.5" y="1.5" width="55" height="49" rx="2" fill="none" stroke="#D0393A" stroke-width="3"/><path d="M29 13 V39 M15 26 H43" stroke="#D0393A" stroke-width="3"/></svg>
    加自选
  </nav-item>
  <nav-item>
    <svg slot="icon" width="54" height="56" viewBox="0 0 54 56"><ellipse cx="27" cy="28" rx="25.5" ry="26.5" fill="none" stroke="#9C9C9C" stroke-width="3"/><path d="M18 17 H36 M18 28 H36 M18 39 H36" stroke="#9C9C9C" stroke-width="4"/></svg>
    功能
  </nav-item>
  <div class="home"></div>
  <div class="mark">
    <svg width="40" height="34" viewBox="0 0 40 34"><ellipse cx="16" cy="22" rx="14" ry="10" fill="none" stroke="#fff" stroke-width="3"/><circle cx="15" cy="22" r="4" fill="#fff"/><path d="M26 5 A10 10 0 0 1 36 16 M26 11 A5 5 0 0 1 31 16" fill="none" stroke="#fff" stroke-width="2.5"/></svg>
    <span>@金融八卦女</span>
  </div>
`);
</script>
</body>
</html>
